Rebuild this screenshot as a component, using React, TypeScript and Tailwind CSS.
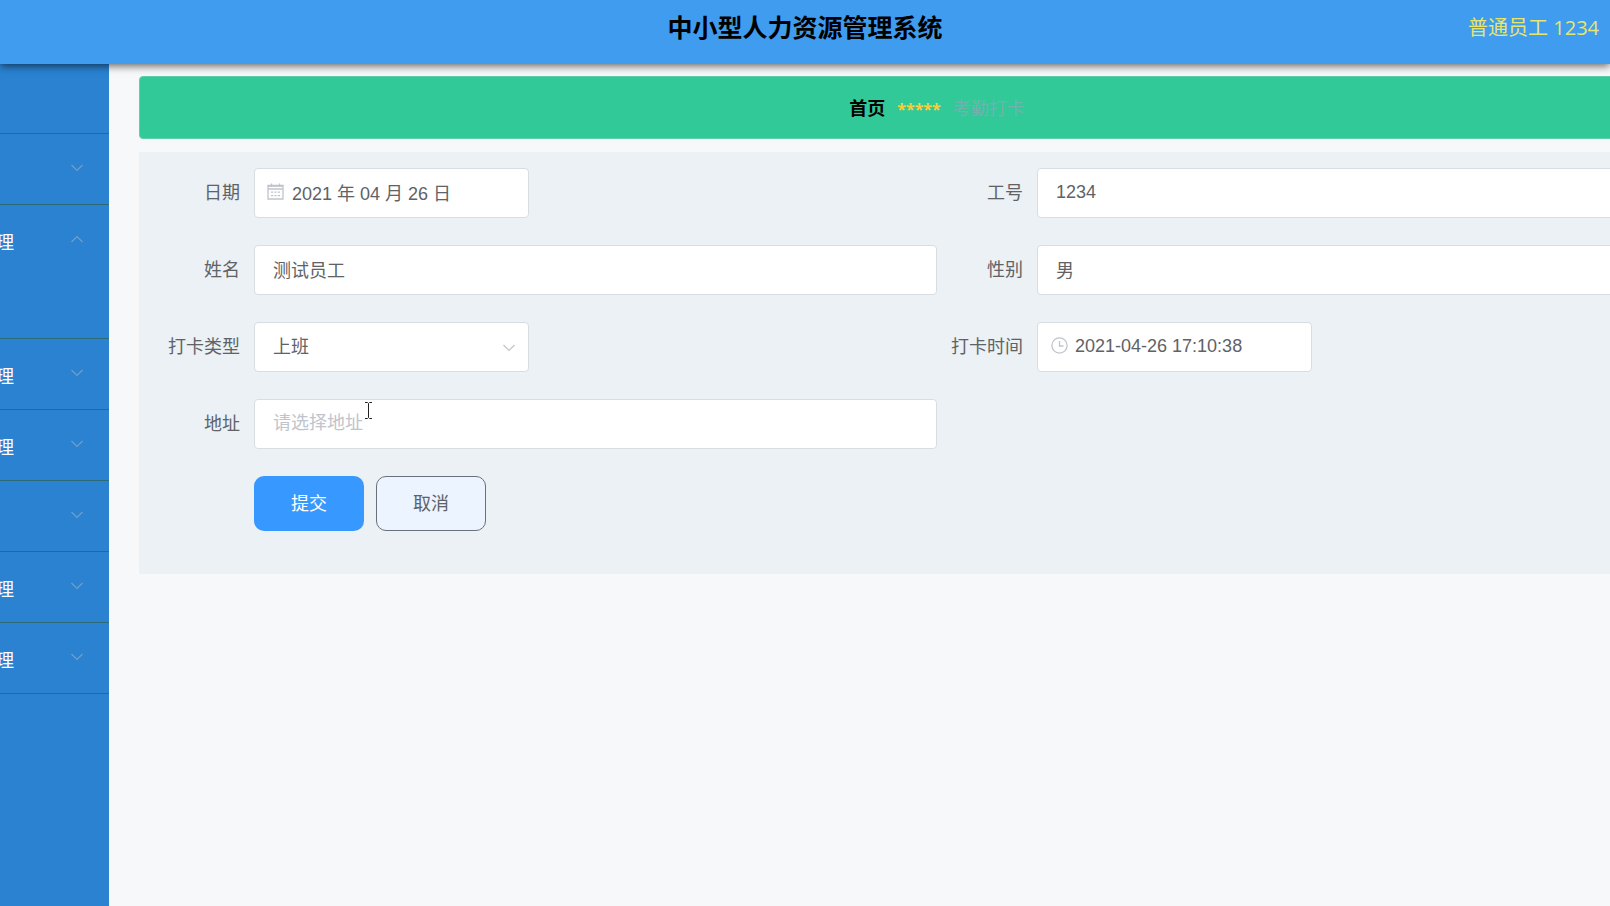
import type { ReactNode } from 'react'

type MenuItem = { id: string; text: string; expandable: boolean; open: boolean }

const menu: MenuItem[] = [
  { id: 'm1', text: '', expandable: false, open: false },
  { id: 'm2', text: '', expandable: true, open: false },
  { id: 'm3', text: '理', expandable: true, open: true },
  { id: 'm4', text: '理', expandable: true, open: false },
  { id: 'm5', text: '理', expandable: true, open: false },
  { id: 'm6', text: '', expandable: true, open: false },
  { id: 'm7', text: '理', expandable: true, open: false },
  { id: 'm8', text: '理', expandable: true, open: false },
]

const inputClass =
  'h-[50px] w-full rounded border border-[#d8dde3] bg-white px-[18px] pb-0.5 text-lg text-[#606266] outline-none placeholder:text-[#c0c4cc]'
const iconInputClass =
  'h-[50px] w-full rounded border border-[#d8dde3] bg-white pr-4 pb-0.5 pl-[37px] text-lg text-[#606266] outline-none'

function Chevron({ up = false, className }: { up?: boolean; className: string }) {
  return (
    <svg viewBox="0 0 14 8" fill="none" stroke="currentColor" strokeWidth="1.2" className={className}>
      <path d={up ? 'M1.5 7 7 1.5 12.5 7' : 'M1.5 1 7 6.5 12.5 1'} />
    </svg>
  )
}

function CalendarIcon() {
  return (
    <svg viewBox="0 0 17 17" fill="none" stroke="currentColor" className="pointer-events-none absolute top-[15px] left-[13px] size-[17px] text-[#c0c4cc]">
      <path d="M1 2.5h15v13.5H1z" strokeWidth="1.3" />
      <path d="M1 3h15" strokeWidth="1.6" />
      <path d="M1 6h15M4.5 0.5v3M12.5 0.5v3" strokeWidth="1.3" />
      <path d="M4 9.2h2.2M7.4 9.2h2.2M10.8 9.2h2.2M4 12.6h2.2M7.4 12.6h2.2M10.8 12.6h2.2" strokeWidth="1.2" />
    </svg>
  )
}

function ClockIcon() {
  return (
    <svg viewBox="0 0 17 17" fill="none" stroke="currentColor" strokeWidth="1.3" className="pointer-events-none absolute top-[15px] left-[14px] size-[17px] text-[#c0c4cc]">
      <circle cx="8.5" cy="8.5" r="7.6" />
      <path d="M8.5 4v5h4" />
    </svg>
  )
}

function Field({ id, label, narrow = false, children }: { id: string; label: string; narrow?: boolean; children: ReactNode }) {
  return (
    <div className="flex items-center">
      <label htmlFor={id} className="w-[100px] shrink-0 pr-[14px] text-right whitespace-nowrap">
        {label}
      </label>
      <div className={narrow ? 'relative w-[275px]' : 'relative flex-1'}>{children}</div>
    </div>
  )
}

export default function App() {
  return (
    <div className="flex min-h-screen flex-col overflow-hidden bg-[#f6f8fa] font-['Liberation_Sans','Noto_Sans_CJK_SC',sans-serif] text-lg text-[#606266]">
      <header className="relative z-10 grid h-16 grid-cols-[1fr_auto_1fr] items-center bg-[#3f9cee] pb-2 shadow-[0_2px_8px_rgba(0,0,0,0.6)]">
        <h1 className="col-start-2 text-[25px] font-bold text-black">中小型人力资源管理系统</h1>
        <p className="justify-self-end pr-[11px] font-['Open_Sans','Noto_Sans_CJK_SC',sans-serif] text-xl text-[#e6e66e]">普通员工 1234</p>
      </header>

      <div className="flex flex-1">
        <nav className="w-[109px] shrink-0 overflow-hidden bg-[#2a82d1] text-white">
          <ul>
            {menu.map((item) => (
              <li key={item.id} className="border-b border-[#2b6c74] first:-mt-px">
                <button type="button" aria-expanded={item.expandable ? item.open : undefined} className="-ml-1 flex h-[70px] w-[113px] items-center justify-between pr-[25px]">
                  <span className="pt-1.5">{item.text}</span>
                  {item.expandable && <Chevron up={item.open} className="mb-0.5 h-2 w-3.5 text-[#6f9fc6]" />}
                </button>
                {item.open && <div className="h-[63px]" />}
              </li>
            ))}
          </ul>
        </nav>

        <main className="-mr-[125px] min-w-0 flex-1 pt-3 pl-[30px]">
          <div className="flex h-[63px] items-center justify-center gap-3 rounded border border-[#5fcfaa] bg-[#32c999] pt-0.5">
            <a href="#home" className="font-bold text-black">首页</a>
            <span className="font-['Noto_Sans',sans-serif] text-base font-bold text-[#f5cf3f]">*****</span>
            <span className="text-[#6fb3ac]">考勤打卡</span>
          </div>

          <form className="mt-[13px] grid grid-cols-2 gap-y-[27px] bg-[#ebf1f5] px-[15px] pt-4 pb-[43px]" onSubmit={(e) => e.preventDefault()}>
            <Field id="date" label="日期" narrow>
              <CalendarIcon />
              <input id="date" className={iconInputClass} defaultValue="2021 年 04 月 26 日" />
            </Field>
            <Field id="number" label="工号">
              <input id="number" className={inputClass} defaultValue="1234" />
            </Field>
            <Field id="name" label="姓名">
              <input id="name" className={inputClass} defaultValue="测试员工" />
            </Field>
            <Field id="gender" label="性别">
              <input id="gender" className={inputClass} defaultValue="男" />
            </Field>
            <Field id="type" label="打卡类型" narrow>
              <select id="type" className="h-[50px] w-full appearance-none rounded border border-[#d8dde3] bg-white px-[18px] text-lg text-[#606266] outline-none">
                <option>上班</option>
              </select>
              <Chevron className="pointer-events-none absolute top-[22px] right-[13px] h-2 w-3.5 text-[#c0c4cc]" />
            </Field>
            <Field id="time" label="打卡时间" narrow>
              <ClockIcon />
              <input id="time" className={iconInputClass} defaultValue="2021-04-26 17:10:38" />
            </Field>
            <Field id="address" label="地址">
              <input id="address" className={inputClass} placeholder="请选择地址" />
              <svg viewBox="0 0 9 17" fill="none" stroke="#222" className="pointer-events-none absolute top-[3px] left-[110px] h-[17px] w-[9px]">
                <path d="M1 .5h2.5l1 1 1-1H8M4.5 1.5v14M1 16.5h2.5l1-1 1 1H8" />
              </svg>
            </Field>
            <div className="col-span-2 flex gap-3 pl-[100px]">
              <button type="submit" className="h-[55px] w-[110px] rounded-[10px] bg-[#3799ff] text-white">提交</button>
              <button type="button" className="h-[55px] w-[110px] rounded-[10px] border border-[#6b6f78] bg-[#ebf4ff]">取消</button>
            </div>
          </form>
        </main>
      </div>
    </div>
  )
}
